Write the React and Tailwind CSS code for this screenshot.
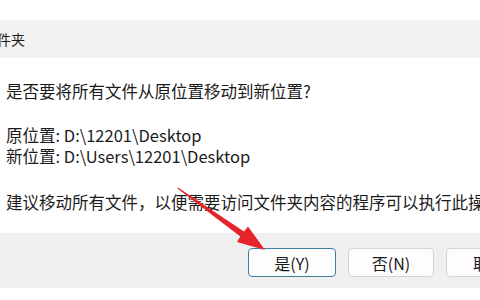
export default function App() {
    const font = { fontFamily: '"Microsoft YaHei", "Noto Sans CJK SC", "Noto Sans", sans-serif' };

    return (
        <div className="relative h-[300px] w-[480px] overflow-hidden bg-white text-[#1b1b1b]" style={font}>
            <div className="h-[20px] bg-white" />

            <div className="flex h-[38px] items-center bg-[#f4f1f1]">
                <span className="ml-[-17px] whitespace-nowrap text-[14px] leading-none">文件夹</span>
            </div>

            <div className="h-[175px] whitespace-nowrap pl-[6px] pt-[23px] text-[16.5px] leading-[21px]">
                <p>是否要将所有文件从原位置移动到新位置?</p>
                <p className="mt-[23px]">原位置: D:\12201\Desktop</p>
                <p>新位置: D:\Users\12201\Desktop</p>
                <p className="mt-[25px]">建议移动所有文件，以便需要访问文件夹内容的程序可以执行此操作。</p>
            </div>

            <div className="flex h-[55px] gap-[12px] whitespace-nowrap bg-[#f0f0f0] pl-[248px] pt-[15px]">
                <button className="flex h-[29px] w-[88px] shrink-0 items-center justify-center rounded-[4px] border border-[#3f7fa3] bg-[#fdfdfd] text-[16px]">
                    是(Y)
                </button>
                <button className="flex h-[29px] w-[86px] shrink-0 items-center justify-center rounded-[4px] border border-[#d3d3d3] bg-[#fdfdfd] text-[16px]">
                    否(N)
                </button>
                <button className="flex h-[29px] w-[86px] shrink-0 items-center justify-center rounded-[4px] border border-[#d3d3d3] bg-[#fdfdfd] text-[16px]">
                    取消
                </button>
            </div>

            <svg className="absolute left-0 top-0" width="480" height="300" viewBox="0 0 480 300">
                <polygon
                    points="178,187.5 244,231.5 248,226.5 265,250 237,242 240.3,236.4 177.5,188.5"
                    fill="#e5232a"
                />
            </svg>
        </div>
    );
}
